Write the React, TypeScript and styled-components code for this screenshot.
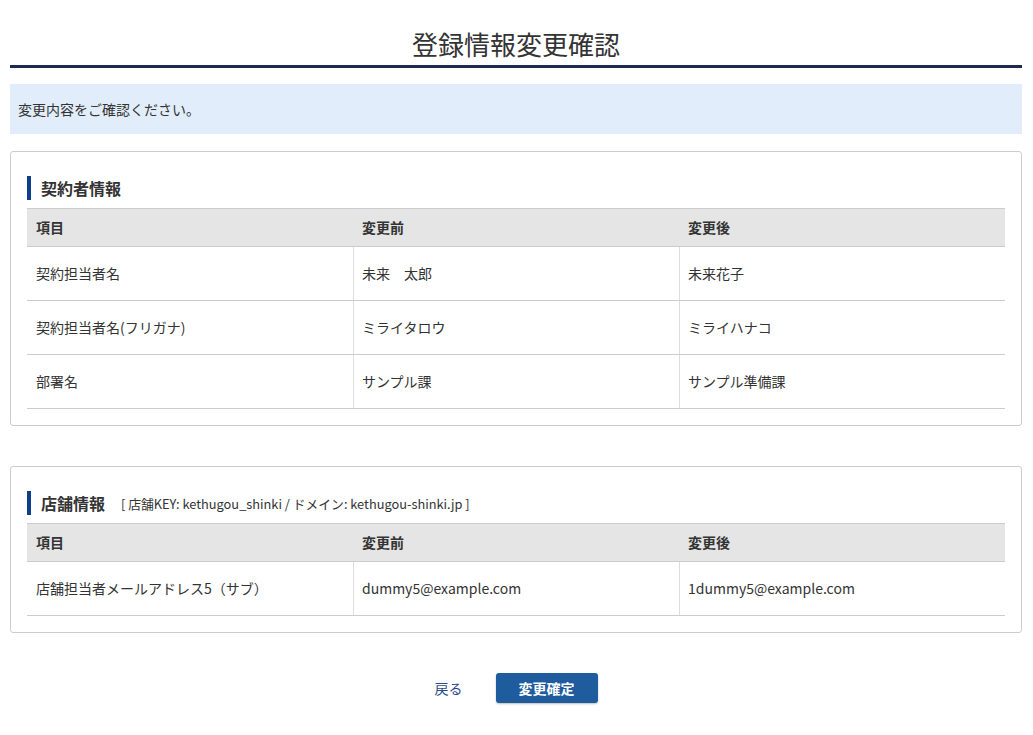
import React from "react";
import styled, { createGlobalStyle } from "styled-components";

const GlobalStyle = createGlobalStyle`
  html, body { margin: 0; padding: 0; background: #fff; }
  body {
    font-family: "Noto Sans CJK JP", "Noto Sans", sans-serif;
    color: #333;
    -webkit-font-smoothing: antialiased;
  }
  * { box-sizing: border-box; }
`;

const Page = styled.div`
  padding: 0 11px 30px 10px;
  display: flex;
  flex-direction: column;
`;

const Title = styled.h1`
  margin: 0;
  padding: 24px 0 2px;
  font-size: 26px;
  line-height: 39px;
  font-weight: 400;
  text-align: center;
  color: #333;
  border-bottom: 3px solid #1f2a50;
`;

const Notice = styled.div`
  margin-top: 16px;
  height: 50px;
  line-height: 50px;
  padding: 0 8px;
  background: #e1edfb;
  font-size: 14px;
  color: #333;
`;

const Card = styled.section<{ $gap: number }>`
  margin-top: ${(p) => p.$gap}px;
  border: 1px solid #ccc;
  border-radius: 3px;
  padding: 24px 16px 16px;
`;

const Heading = styled.div`
  display: flex;
  align-items: center;
  gap: 16px;
  height: 24px;
  margin-bottom: 8px;
  border-left: 4px solid #0d3f8a;
  padding-left: 10px;
`;

const HeadingText = styled.h2`
  margin: 0;
  font-size: 16px;
  font-weight: 700;
  line-height: 24px;
  color: #333;
`;

const HeadingNote = styled.span`
  font-size: 12.8px;
  line-height: 24px;
  color: #333;
  padding-top: 2px;
`;

const Row = styled.div<{ $head?: boolean }>`
  display: grid;
  grid-template-columns: repeat(3, 1fr);
  height: ${(p) => (p.$head ? 39 : 54)}px;
  background: ${(p) => (p.$head ? "#e5e5e5" : "#fff")};
  border-top: ${(p) => (p.$head ? "1px solid #ccc" : "none")};
  border-bottom: 1px solid #ccc;
`;

const Cell = styled.div<{ $head?: boolean; $divider?: boolean }>`
  display: flex;
  align-items: center;
  font-size: 14px;
  font-weight: ${(p) => (p.$head ? 700 : 400)};
  color: #333;
  border-left: ${(p) => (p.$divider ? "1px solid #ddd" : "none")};
  padding: 0 9px 2px ${(p) => (p.$divider ? 8 : 9)}px;
`;

const Actions = styled.div`
  margin-top: 40px;
  display: flex;
  justify-content: center;
  align-items: center;
  gap: 33px;
`;

const BackLink = styled.a`
  font-size: 14px;
  color: #2c4a8c;
  text-decoration: none;
  cursor: pointer;
`;

const SubmitButton = styled.button`
  width: 102px;
  height: 30px;
  border: none;
  border-radius: 3px;
  background: #1f5c9e;
  color: #fff;
  font-family: inherit;
  font-size: 14px;
  font-weight: 700;
  box-shadow: 0 1px 2px rgba(0, 0, 0, 0.25);
  cursor: pointer;
`;

type Item = { label: string; before: string; after: string };

const contractItems: Item[] = [
  { label: "契約担当者名", before: "未来　太郎", after: "未来花子" },
  { label: "契約担当者名(フリガナ)", before: "ミライタロウ", after: "ミライハナコ" },
  { label: "部署名", before: "サンプル課", after: "サンプル準備課" },
];

const storeItems: Item[] = [
  {
    label: "店舗担当者メールアドレス5（サブ）",
    before: "dummy5@example.com",
    after: "1dummy5@example.com",
  },
];

const ChangeTable = ({ items }: { items: Item[] }) => (
  <div>
    <Row $head>
      <Cell $head>項目</Cell>
      <Cell $head>変更前</Cell>
      <Cell $head>変更後</Cell>
    </Row>
    {items.map((it) => (
      <Row key={it.label}>
        <Cell>{it.label}</Cell>
        <Cell $divider>{it.before}</Cell>
        <Cell $divider>{it.after}</Cell>
      </Row>
    ))}
  </div>
);

export default function App() {
  return (
    <>
      <GlobalStyle />
      <Page>
        <Title>登録情報変更確認</Title>
        <Notice>変更内容をご確認ください。</Notice>

        <Card $gap={17}>
          <Heading>
            <HeadingText>契約者情報</HeadingText>
          </Heading>
          <ChangeTable items={contractItems} />
        </Card>

        <Card $gap={40}>
          <Heading>
            <HeadingText>店舗情報</HeadingText>
            <HeadingNote>
              [ 店舗KEY: kethugou_shinki / ドメイン: kethugou-shinki.jp ]
            </HeadingNote>
          </Heading>
          <ChangeTable items={storeItems} />
        </Card>

        <Actions>
          <BackLink>戻る</BackLink>
          <SubmitButton type="button">変更確定</SubmitButton>
        </Actions>
      </Page>
    </>
  );
}
